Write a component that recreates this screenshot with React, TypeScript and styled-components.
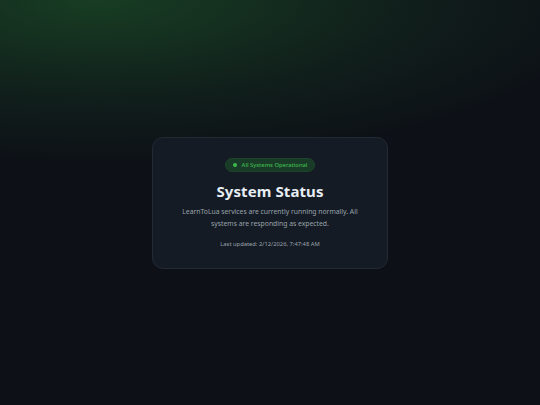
import React from 'react';
import styled, { createGlobalStyle } from "styled-components";

const GlobalStyle = createGlobalStyle`
  html, body, #root {
    margin: 0;
    padding: 0;
    height: 100%;
  }
  body {
    background: #0d1117;
    font-family: "Noto Sans", "Open Sans", sans-serif;
  }
`;

const Page = styled.main`
  min-height: 100vh;
  display: flex;
  align-items: center;
  justify-content: center;
  background:
    radial-gradient(ellipse 95% 40% at 18% 0%, rgba(38, 122, 52, 0.42), rgba(38, 122, 52, 0.13) 60%, transparent 100%),
    #0d1117;
`;

const Card = styled.section`
  width: 236px;
  box-sizing: border-box;
  padding: 20px 24px 19px;
  background: #151b24;
  border: 1px solid #222a33;
  border-radius: 11px;
  display: flex;
  flex-direction: column;
  align-items: center;
  text-align: center;
`;

const Badge = styled.div`
  display: inline-flex;
  align-items: center;
  gap: 5px;
  height: 14px;
  box-sizing: border-box;
  padding: 0 7px;
  border-radius: 999px;
  background: #193a26;
  border: 1px solid #1d452b;
  color: #3fb950;
  font-size: 5.8px;
  font-weight: 500;
`;

const Dot = styled.span`
  width: 4px;
  height: 4px;
  border-radius: 50%;
  background: #3fb950;
`;

const Title = styled.h1`
  margin: 9px 0 0;
  font-size: 15px;
  line-height: 20px;
  font-weight: 700;
  color: #e6edf3;
  letter-spacing: 0.1px;
`;

const Description = styled.p`
  margin: 5px 0 0;
  font-size: 6.8px;
  line-height: 12px;
  color: #9aa3ad;
`;

const Updated = styled.p`
  margin: 10px 0 0;
  font-size: 5.8px;
  line-height: 9px;
  color: #9aa3ad;
`;

const App = () => {
  return (
    <>
      <GlobalStyle />
      <Page>
        <Card>
          <Badge>
            <Dot />
            All Systems Operational
          </Badge>
          <Title>System Status</Title>
          <Description>
            LearnToLua services are currently running normally. All systems are responding as expected.
          </Description>
          <Updated>Last updated: 2/12/2026, 7:47:48 AM</Updated>
        </Card>
      </Page>
    </>
  );
};

export default App;
